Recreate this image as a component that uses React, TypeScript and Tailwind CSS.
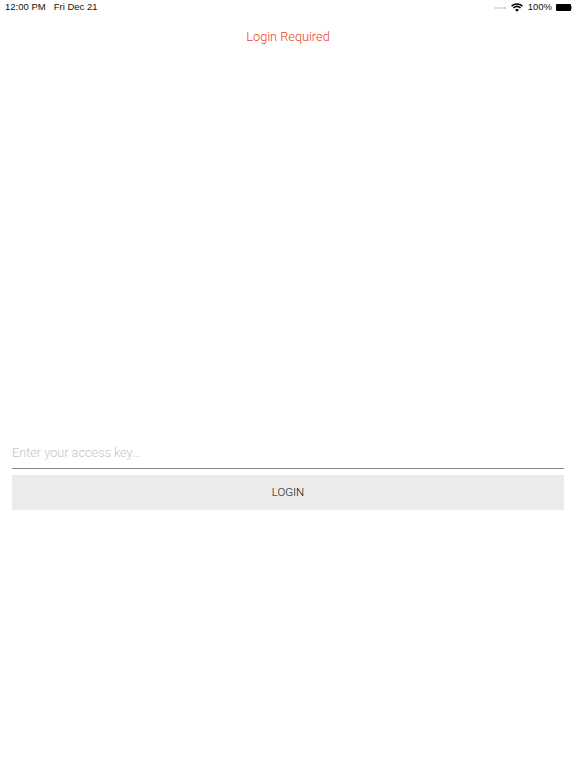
function WifiIcon() {
  return (
    <svg viewBox="0 0 12 9" className="mr-[5px] h-[9px] w-[12px]" fill="none" stroke="black" strokeWidth="1.5">
      <path d="M0.6 3.1C3.7 0.2 8.3 0.2 11.4 3.1" />
      <path d="M2.4 5C4.5 3.1 7.5 3.1 9.6 5" />
      <path d="M6 8.8L4 6.8C5.2 5.8 6.8 5.8 8 6.8Z" fill="black" stroke="none" />
    </svg>
  );
}

function StatusBar() {
  return (
    <div className="flex h-[15px] items-center justify-between pl-[5px] pr-[4px] text-[9.5px] text-[#111] font-['Liberation_Sans',sans-serif]">
      <div className="flex gap-[8px]">
        <span>12:00 PM</span>
        <span>Fri Dec 21</span>
      </div>
      <div className="flex items-center">
        <div className="mr-[5px] flex gap-[1px]">
          <span className="h-[2px] w-[2px] rounded-full bg-[#bbb]" />
          <span className="h-[2px] w-[2px] rounded-full bg-[#bbb]" />
          <span className="h-[2px] w-[2px] rounded-full bg-[#bbb]" />
          <span className="h-[2px] w-[2px] rounded-full bg-[#bbb]" />
        </div>
        <WifiIcon />
        <span className="mr-[4px]">100%</span>
        <div className="flex items-center">
          <div className="h-[7px] w-[15px] rounded-[1px] bg-black" />
          <div className="h-[3px] w-[1px] bg-[#888]" />
        </div>
      </div>
    </div>
  );
}

export default function App() {
  return (
    <div className="min-h-[768px] bg-white font-['Roboto',sans-serif]">
      <StatusBar />
      <h1 className="mt-[12px] text-center text-[12.75px] leading-5 font-light text-[#f03a20]">
        Login Required
      </h1>
      <div className="mt-[386px] px-3">
        <input
          placeholder="Enter your access key..."
          className="h-[36px] w-full border-b border-[#888] pt-[3px] text-[12.7px] font-light outline-none placeholder:text-[#c4c4c4]"
        />
        <button className="mt-[6px] h-[35px] w-full bg-[#ebebeb] text-[11.5px] font-light text-[#111]">
          LOGIN
        </button>
      </div>
    </div>
  );
}
